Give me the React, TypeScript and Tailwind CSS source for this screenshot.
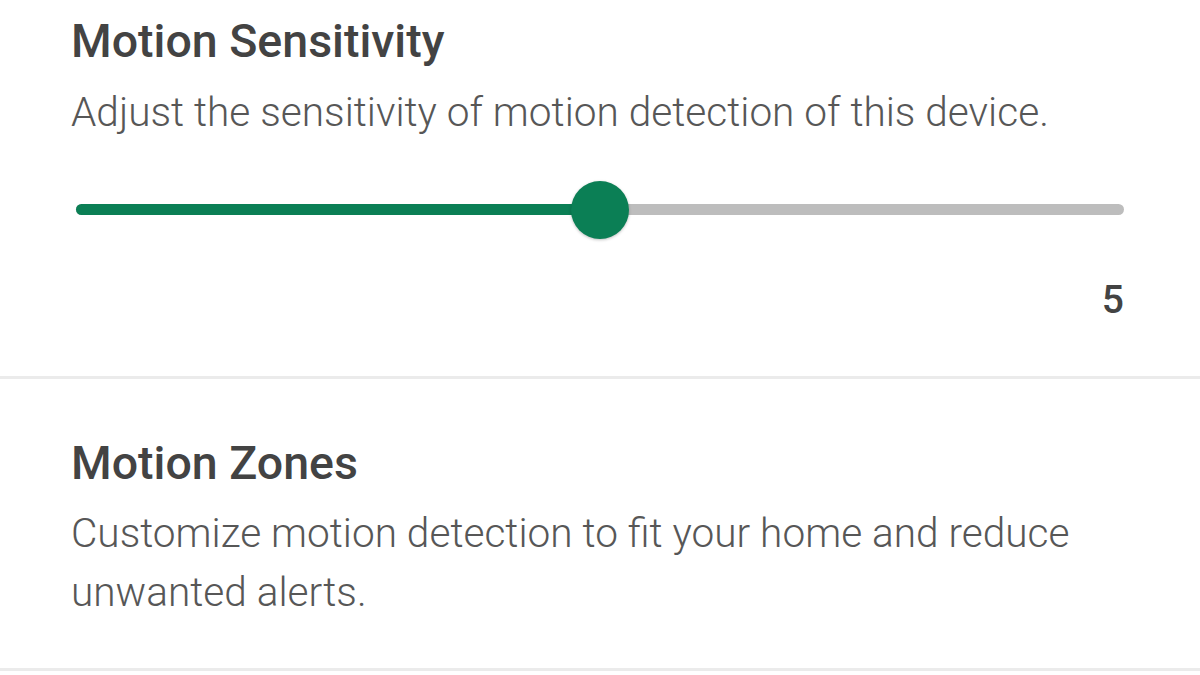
export default function App() {
  const value = 5;
  const max = 10;
  const pct = (value / max) * 100;

  return (
    <div className="h-[675px] w-[1200px] overflow-hidden bg-white font-['Roboto',sans-serif]">
      <section className="border-b-[3px] border-[#ebebeb] pl-[71px]">
        <h2 className="pt-[11px] text-[46.5px] font-medium leading-[60px] text-[#434343]">Motion Sensitivity</h2>
        <p className="mt-[16px] text-[40.6px] font-light leading-[50px] text-[#575757]">
          Adjust the sensitivity of motion detection of this device.
        </p>

        <div className="pr-[76px]">
          <div className="relative mt-[67px] ml-[5px] h-[11px] rounded-full bg-[#bdbdbd]">
            <div className="h-full rounded-full bg-[#0b7f55]" style={{ width: `${pct}%` }} />
            <div
              className="absolute top-1/2 h-[58px] w-[58px] -translate-x-1/2 -translate-y-1/2 rounded-full bg-[#0b7f55] shadow-[0_1px_3px_rgba(0,0,0,0.25)]"
              style={{ left: `${pct}%` }}
            />
          </div>
          <div className="mt-[65px] pb-[56px] text-right text-[39px] font-medium leading-[40px] text-[#434343]">{value}</div>
        </div>
      </section>

      <section className="border-b-[3px] border-[#ebebeb] pl-[71px] pr-[76px]">
        <h2 className="pt-[54px] text-[46.5px] font-medium leading-[60px] text-[#434343]">Motion Zones</h2>
        <p className="mt-[11px] pb-[46px] text-[40.6px] font-light leading-[59px] text-[#575757]">
          Customize motion detection to fit your home and reduce unwanted alerts.
        </p>
      </section>
    </div>
  );
}
